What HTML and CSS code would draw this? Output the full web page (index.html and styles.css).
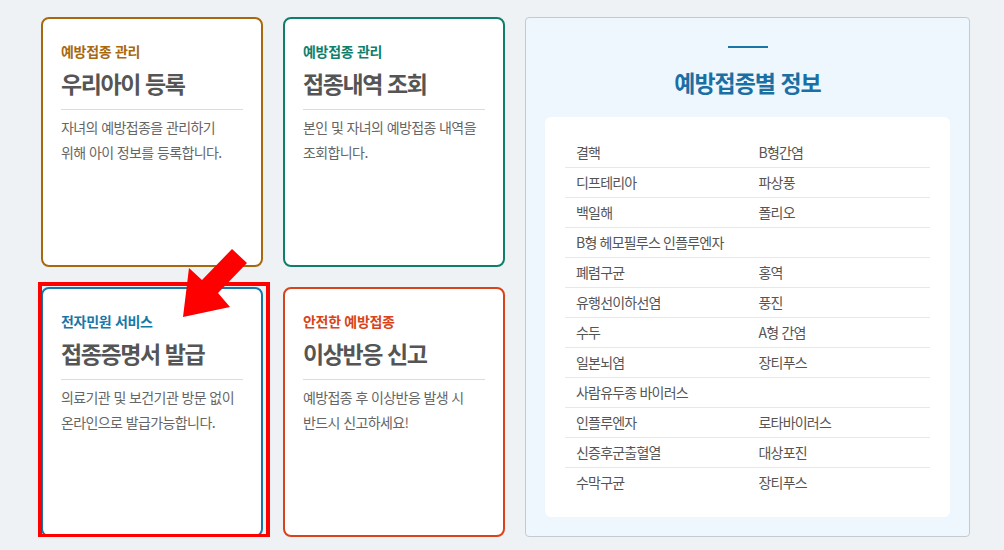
FILE: index.html
```html
<!DOCTYPE html>
<html lang="ko">
<head>
    <meta charset="UTF-8">
    <meta name="viewport" content="width=device-width, initial-scale=1.0">
    <title>예방접종 서비스</title>
    <link rel="stylesheet" href="styles.css">
</head>
<body>

    <div class="page">
        <div class="card-grid">
            <div class="card card-brown">
                <p class="card-label">예방접종 관리</p>
                <h2 class="card-title">우리아이 등록</h2>
                <p class="card-desc">자녀의 예방접종을 관리하기 위해 아이 정보를 등록합니다.</p>
            </div>
            <div class="card card-green">
                <p class="card-label">예방접종 관리</p>
                <h2 class="card-title">접종내역 조회</h2>
                <p class="card-desc">본인 및 자녀의 예방접종 내역을 조회합니다.</p>
            </div>
            <div class="card card-blue marked">
                <p class="card-label">전자민원 서비스</p>
                <h2 class="card-title">접종증명서 발급</h2>
                <p class="card-desc">의료기관 및 보건기관 방문 없이 온라인으로 발급가능합니다.</p>
            </div>
            <div class="card card-red">
                <p class="card-label">안전한 예방접종</p>
                <h2 class="card-title">이상반응 신고</h2>
                <p class="card-desc">예방접종 후 이상반응 발생 시 반드시 신고하세요!</p>
            </div>

            <!-- annotation arrow -->
            <svg class="pointer" width="80" height="85" viewBox="0 0 80 85">
                <polygon points="57,9 72,23 43,53 55,67 8,77 14,28 27,40" fill="#ff0000"/>
            </svg>
        </div>

        <div class="info-panel">
            <span class="info-bar"></span>
            <h2 class="info-title">예방접종별 정보</h2>
            <div class="info-box">
                <table class="vaccine-table">
                    <tr><td>결핵</td><td>B형간염</td></tr>
                    <tr><td>디프테리아</td><td>파상풍</td></tr>
                    <tr><td>백일해</td><td>폴리오</td></tr>
                    <tr><td>B형 헤모필루스 인플루엔자</td><td></td></tr>
                    <tr><td>폐렴구균</td><td>홍역</td></tr>
                    <tr><td>유행선이하선염</td><td>풍진</td></tr>
                    <tr><td>수두</td><td>A형 간염</td></tr>
                    <tr><td>일본뇌염</td><td>장티푸스</td></tr>
                    <tr><td>사람유두종 바이러스</td><td></td></tr>
                    <tr><td>인플루엔자</td><td>로타바이러스</td></tr>
                    <tr><td>신증후군출혈열</td><td>대상포진</td></tr>
                    <tr><td>수막구균</td><td>장티푸스</td></tr>
                </table>
            </div>
        </div>
    </div>

</body>
</html>
```

FILE: styles.css
```css
* {
    margin: 0;
    padding: 0;
    box-sizing: border-box;
}
body {
    font-family: "Noto Sans CJK KR", "Noto Sans", sans-serif;
    background-color: #eef2f5;
    color: #555;
}
.page {
    display: flex;
    gap: 20px;
    padding: 17px 0 0 41px;
}
.card-grid {
    position: relative;
    display: grid;
    grid-template-columns: 222px 222px;
    grid-template-rows: 250px 250px;
    gap: 20px;
}
.card {
    position: relative;
    background-color: #fff;
    border: 2px solid #999;
    border-radius: 8px;
    padding: 22px 18px;
}
.card-label {
    font-size: 14px;
    line-height: 20px;
    font-weight: 700;
    letter-spacing: -0.3px;
}
.card-title {
    margin-top: 7px;
    padding-bottom: 11px;
    border-bottom: 1px solid #dcdcdc;
    font-size: 23px;
    line-height: 30px;
    font-weight: 600;
    letter-spacing: -1.4px;
    color: #555;
}
.card-desc {
    margin-top: 5px;
    padding-right: 6px;
    font-size: 14px;
    line-height: 25px;
    letter-spacing: -0.6px;
    color: #666;
    word-break: keep-all;
}
.card-brown { border-color: #a8690e; }
.card-brown .card-label { color: #a8690e; }
.card-green { border-color: #0f7f6c; }
.card-green .card-label { color: #0f7f6c; }
.card-blue { border-color: #1777a8; }
.card-blue .card-label { color: #1777a8; }
.card-red { border-color: #d8441a; }
.card-red .card-label { color: #d8441a; }

/* red annotation box */
.marked::after {
    content: "";
    position: absolute;
    left: -5px;
    top: -7px;
    right: -9px;
    bottom: -3px;
    border: 4px solid #ff0000;
}
.pointer {
    position: absolute;
    left: 134px;
    top: 223px;
}

.info-panel {
    width: 445px;
    height: 520px;
    background-color: #eef6fe;
    border: 1px solid #c5cad1;
    border-radius: 4px;
    padding: 28px 19px 19px;
    display: flex;
    flex-direction: column;
    align-items: center;
}
.info-bar {
    display: block;
    width: 40px;
    height: 2px;
    background-color: #1777a8;
}
.info-title {
    margin-top: 19px;
    font-size: 23px;
    line-height: 30px;
    font-weight: 700;
    letter-spacing: -1px;
    color: #1a6fa3;
}
.info-box {
    width: 100%;
    margin-top: 20px;
    background-color: #fff;
    border-radius: 6px;
    padding: 20px;
}
.vaccine-table {
    width: 100%;
    border-collapse: collapse;
    table-layout: fixed;
}
.vaccine-table td {
    height: 30px;
    padding: 0 0 0 11px;
    font-size: 14px;
    letter-spacing: -0.8px;
    color: #555;
    border-bottom: 1px solid #e6e8ef;
}
.vaccine-table tr:last-child td {
    border-bottom: none;
}
```
